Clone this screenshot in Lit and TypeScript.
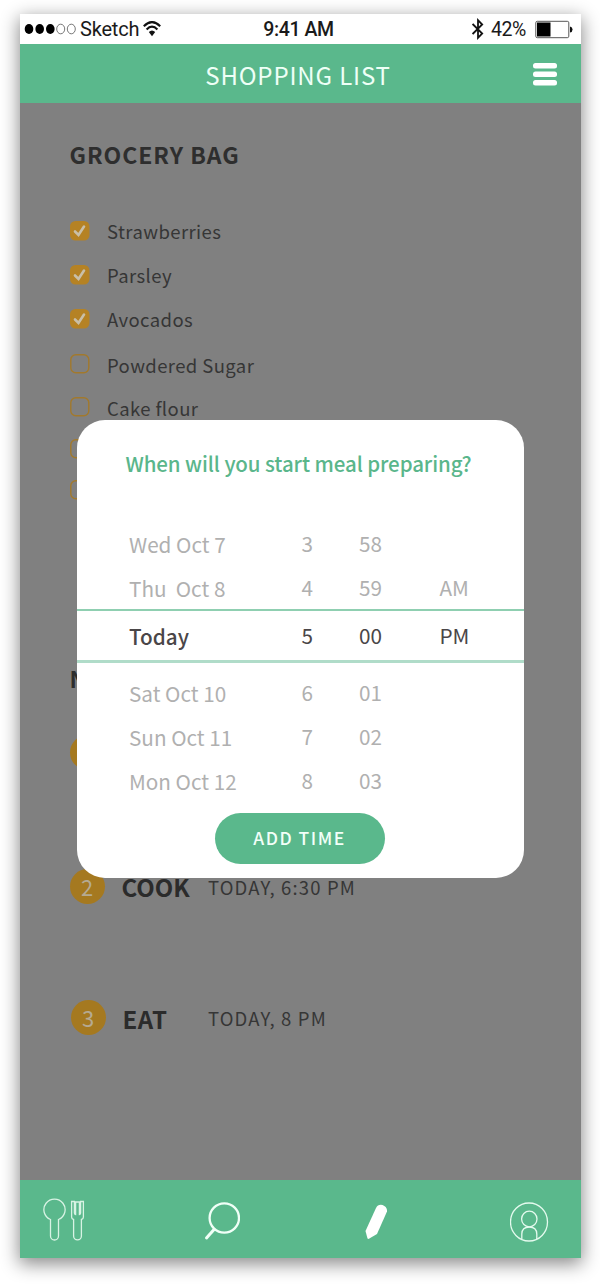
import { LitElement, html, css, svg } from "lit";
import { customElement } from "lit/decorators.js";
import { classMap } from "lit/directives/class-map.js";

const GROCERIES = [
  { name: "Strawberries", done: true, fit: "" },
  { name: "Parsley", done: true, fit: "" },
  { name: "Avocados", done: true, fit: "" },
  { name: "Powdered Sugar", done: false, fit: "tall" },
  { name: "Cake flour", done: false, fit: "short" },
  { name: "", done: false, fit: "" },
  { name: "", done: false, fit: "compact" },
];

const TIMES = [
  ["Wed Oct 7", "3", "58", ""],
  ["Thu\u00a0 Oct 8", "4", "59", "AM"],
  ["Today", "5", "00", "PM"],
  ["Sat Oct 10", "6", "01", ""],
  ["Sun Oct 11", "7", "02", ""],
  ["Mon Oct 12", "8", "03", ""],
];

@customElement("status-bar")
class StatusBar extends LitElement {
  static styles = css`
    :host { display: grid; grid-template-columns: 1fr auto 1fr; align-items: center; box-sizing: border-box; height: 30px; background: #fff; color: #1a1a1a; font: 20px/29px Roboto, sans-serif; padding: 0 8px 0 4px; }
    .left { display: flex; align-items: center; }
    .right { display: flex; align-items: center; justify-content: flex-end; }
    .carrier { margin: 0 4px 0 4px; letter-spacing: -0.2px; padding-top: 1px; }
    .time { font-weight: 500; font-size: 19.5px; letter-spacing: -0.4px; padding-top: 1px; }
    .pct { margin: 0 9px 0 7px; font-size: 19.5px; letter-spacing: -0.4px; padding-top: 1px; }
    svg { display: block; }
  `;
  render() {
    return html`
      <div class="left">
        <svg width="52" height="12" viewBox="0 0 52 12">
          <g fill="#000"><ellipse cx="5" cy="6" rx="4.3" ry="5" /><ellipse cx="15.7" cy="6" rx="4.3" ry="5" /><ellipse cx="26.3" cy="6" rx="4.3" ry="5" /></g>
          <g fill="none" stroke="#666" stroke-width=".9"><ellipse cx="36.7" cy="6" rx="4" ry="4.8" /><ellipse cx="47.3" cy="6" rx="4" ry="4.8" /></g>
        </svg>
        <span class="carrier">Sketch</span>
        <svg width="18" height="16" viewBox="0 0 18 16">
          <g fill="none" stroke="#111" stroke-width="2.1"><path d="M.8 5.2Q9-3 17.2 5.2" /><path d="M3.6 8.4Q9 2.8 14.4 8.4" /></g>
          <path d="M5.8 11Q9 8 12.2 11L9 15.2Z" fill="#111" />
        </svg>
      </div>
      <div class="time">9:41 AM</div>
      <div class="right">
        <svg width="12" height="22" viewBox="0 0 12 22"><path d="M.6 6L10.2 15.5L6 19.8V2.200L10.200 6.500L.6 16" fill="none" stroke="#111" stroke-width="1.8" /></svg>
        <span class="pct">42%</span>
        <svg width="38" height="19" viewBox="0 0 38 19">
          <rect x=".8" y="1.3" width="33" height="16.4" rx="1.5" fill="#fff" stroke="#555" stroke-width="1" />
          <rect x="2" y="2.5" width="13.5" height="14" fill="#000" /><path d="M35 6.5Q37.5 7 37.5 9.5T35 12.5Z" fill="#111" />
        </svg>
      </div>`;
  }
}

@customElement("time-dialog")
class TimeDialog extends LitElement {
  static styles = css`
    :host { display: flex; flex-direction: column; align-items: center; box-sizing: border-box; width: 447px; height: 458px; padding-top: 30px; background: #fff; border-radius: 28px; overflow: hidden; font-family: "Noto Sans CJK SC", sans-serif; }
    .title { font-size: 20.5px; line-height: 26px; font-weight: 500; color: #5ab68b; white-space: nowrap; letter-spacing: -0.08px; margin: 0 3px 45px 0; }
    .wheel { width: 100%; }
    .row { display: grid; grid-template-columns: 172.5px 57.5px 80.5px 1fr; box-sizing: border-box; height: 44.2px; line-height: 44px; padding-left: 52.5px; font-size: 20.7px; color: #b0b0b0; white-space: nowrap; }
    .row.selected { height: 53.6px; line-height: 48px; border-top: 2px solid #8fcfb1; border-bottom: 3px solid #b0dcc9; color: #4a4648; margin-bottom: 7px; }
    .selected .day { font-weight: 500; }
    .day { padding-top: 1px; }
    .add { margin: 10px 1px 0 0; width: 170px; height: 51px; border: 0; padding: 0 0 2px; border-radius: 26px; background: #5ab88c; color: #f2fff8; font: 500 17.5px/49px "Noto Sans CJK SC", sans-serif; letter-spacing: 1.5px; }
  `;
  render() {
    return html`
      <div class="title">When will you start meal preparing?</div>
      <div class="wheel">
        ${TIMES.map((t, i) => html`<div class=${classMap({ row: true, selected: i === 2 })}>
          <span class="day">${t[0]}</span><span>${t[1]}</span><span>${t[2]}</span><span>${t[3]}</span>
        </div>`)}
      </div>
      <button class="add">ADD TIME</button>`;
  }
}

@customElement("app-root")
class AppRoot extends LitElement {
  static styles = css`
    :host { display: block; box-sizing: border-box; width: 600px; height: 1284px; padding: 14px 0 0 20px; background: #fff; overflow: hidden; font-family: "Noto Sans CJK SC", sans-serif; }
    .phone { position: relative; width: 561px; height: 1244px; display: flex; flex-direction: column; box-shadow: 0 5px 17px 1px rgba(0, 0, 0, 0.46); }
    svg { display: block; }
    .header { display: grid; grid-template-columns: 1fr auto 1fr; align-items: center; height: 59px; background: #5ab88c; padding: 0 24px; color: #eefff6; }
    .heading { grid-column: 2; font-size: 24px; line-height: 62px; height: 59px; letter-spacing: 0.85px; margin-right: 5px; }
    .menu { justify-self: end; padding-top: 2px; }
    .content { flex: 1; background: #808080; color: #363636; padding: 36px 0 0 49.5px; min-height: 0; }
    .section { font-size: 23px; line-height: 30px; font-weight: 700; letter-spacing: 0.95px; color: #2e2e2e; }
    .list { padding-top: 40px; }
    .item { display: flex; align-items: center; gap: 17.5px; height: 44px; font-size: 18.5px; letter-spacing: 0.4px; }
    .item.tall { height: 46px; }
    .item.short { height: 40px; }
    .item.compact { height: 38px; }
    .item.tall span, .item.short span { padding-top: 2px; }
    .plan { padding-top: 154px; }
    .step { display: flex; align-items: center; height: 36px; margin-top: 98px; }
    .step.first { margin-top: 41px; }
    .step.last { margin: 95px 0 0 1px; }
    .num { width: 35px; height: 35px; border-radius: 50%; background: #a57920; color: #b5aa92; font-size: 22px; line-height: 34px; text-align: center; }
    .verb { width: 86.5px; margin-left: 17px; font-size: 24px; font-weight: 700; letter-spacing: 0; color: #2b2b2b; }
    .last .verb { width: 85.5px; padding-top: 2px; letter-spacing: 0.6px; }
    .when { font-size: 18.5px; letter-spacing: 1.15px; padding-top: 1px; }
    .nav { display: flex; align-items: flex-start; height: 78px; padding-left: 23px; background: #5ab88c; box-sizing: border-box; }
    .spoon { margin-top: 18px; }
    .search { margin: 21px 0 0 118px; }
    .pencil { margin: 24px 0 0 125px; }
    .person { margin: 22px 0 0 122.5px; }
    .dialog { position: absolute; left: 56.5px; top: 406px; }
  `;
  box(done: boolean) {
    return html`<svg width="20" height="20" viewBox="0 0 20 20">
      ${done
        ? svg`<rect width="19.5" height="19.5" rx="5.5" fill="#b58224" /><path d="M5 10.5L8.5 14L14 5.5" fill="none" stroke="#c9bfa8" stroke-width="2.6" stroke-linecap="round" />`
        : svg`<rect x=".8" y=".8" width="18" height="18" rx="5" fill="none" stroke="#a2792c" stroke-width="1.4" />`}
    </svg>`;
  }
  step(n: string, verb: string, when: string, place = "") {
    return html`<div class=${"step " + place}><span class="num">${n}</span><span class="verb">${verb}</span><span class="when">${when}</span></div>`;
  }
  render() {
    return html`<div class="phone">
      <status-bar></status-bar>
      <div class="header">
        <div class="heading">SHOPPING LIST</div>
        <svg class="menu" width="24" height="24" viewBox="0 0 24 24" fill="#fff"><rect width="24" height="5.5" rx="2.5" /><rect y="8.5" width="24" height="5.5" rx="2.5" /><rect y="17" width="24" height="5.5" rx="2.5" /></svg>
      </div>
      <div class="content">
        <div class="section">GROCERY BAG</div>
        <div class="list">${GROCERIES.map((g) => html`<div class=${"item " + g.fit}>${this.box(g.done)}<span>${g.name}</span></div>`)}</div>
        <div class="plan">
          <div class="section">N</div>
          ${this.step("", "", "", "first")}${this.step("2", "COOK", "TODAY, 6:30 PM")}${this.step("3", "EAT", "TODAY, 8 PM", "last")}
        </div>
      </div>
      <div class="nav">
        <svg class="spoon" width="43" height="44" viewBox="0 0 43 44" fill="none" stroke="#d8f3e4" stroke-width="1.3">
          <path d="M7.5 21.5A10.6 10.6 0 1 1 15.5 21.5V38A4 4 0 0 1 7.5 38Z" />
          <path d="M28.6 3.5H31.4V15Q31.4 16.5 32.6 16.5V4H36.4V16.5Q37.6 16.5 37.6 15V3.5H40.4V19Q40.4 21 38.4 21.5V38A3.9 3.9 0 0 1 30.6 38V21.5Q28.6 21 28.6 19Z" />
        </svg>
        <svg class="search" width="36" height="40" viewBox="0 0 36 40" fill="none" stroke="#f0fff7" stroke-width="2.3" stroke-linecap="round"><circle cx="20.3" cy="17" r="14.7" /><path d="M10 28.500L2.500 37" stroke-width="3" /></svg>
        <svg class="pencil" width="22" height="36" viewBox="0 0 22 36" fill="#fff"><path d="M11 4Q13 0 17.5 1Q22.5 3 22 7.500L12 30L3.500 35L2.500 34.500L.500 27Z" /></svg>
        <svg class="person" width="39" height="40" viewBox="0 0 39 40" fill="none" stroke="#e4faee" stroke-width="1.3"><ellipse cx="19" cy="20" rx="18.500" ry="19" /><ellipse cx="19.300" cy="17" rx="7.700" ry="7.800" /><path d="M11.800 37V32Q12 25 19.300 25T26.800 32V37" /></svg>
      </div>
      <time-dialog class="dialog"></time-dialog>
    </div>`;
  }
}
